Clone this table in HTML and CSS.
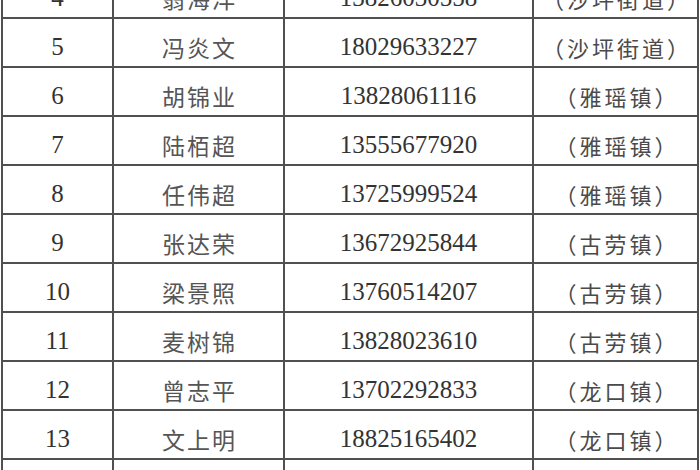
FILE: index.html
```html
<!DOCTYPE html>
<html lang="zh">
<head>
<meta charset="utf-8">
<link rel="stylesheet" href="styles.css">
</head>
<body>
<div class="sheet">
<table class="roster">
  <colgroup>
    <col class="c-no"><col class="c-name"><col class="c-tel"><col class="c-area">
  </colgroup>
  <tbody>
    <tr><td class="no">4</td><td class="name">翁海洋</td><td class="tel">13826030558</td><td class="area">（沙坪街道）</td></tr>
    <tr><td class="no">5</td><td class="name">冯炎文</td><td class="tel">18029633227</td><td class="area">（沙坪街道）</td></tr>
    <tr><td class="no">6</td><td class="name">胡锦业</td><td class="tel">13828061116</td><td class="area">（雅瑶镇）</td></tr>
    <tr><td class="no">7</td><td class="name">陆栢超</td><td class="tel">13555677920</td><td class="area">（雅瑶镇）</td></tr>
    <tr><td class="no">8</td><td class="name">任伟超</td><td class="tel">13725999524</td><td class="area">（雅瑶镇）</td></tr>
    <tr><td class="no">9</td><td class="name">张达荣</td><td class="tel">13672925844</td><td class="area">（古劳镇）</td></tr>
    <tr><td class="no">10</td><td class="name">梁景照</td><td class="tel">13760514207</td><td class="area">（古劳镇）</td></tr>
    <tr><td class="no">11</td><td class="name">麦树锦</td><td class="tel">13828023610</td><td class="area">（古劳镇）</td></tr>
    <tr><td class="no">12</td><td class="name">曾志平</td><td class="tel">13702292833</td><td class="area">（龙口镇）</td></tr>
    <tr><td class="no">13</td><td class="name">文上明</td><td class="tel">18825165402</td><td class="area">（龙口镇）</td></tr>
    <tr><td class="no"></td><td class="name"></td><td class="tel"></td><td class="area"></td></tr>
  </tbody>
</table>
</div>
</body>
</html>
```

FILE: styles.css
```css
html, body {
  margin: 0;
  padding: 0;
  background: #ffffff;
}

.sheet {
  width: 700px;
  height: 470px;
  overflow: hidden;
  background: #ffffff;
}

.roster {
  border-collapse: collapse;
  table-layout: fixed;
  width: 696px;
  margin: -32px 0 0 1px;
  color: #3a3a3a;
}

.c-no { width: 111px; }
.c-name { width: 171px; }
.c-tel { width: 249px; }
.c-area { width: 165px; }

.roster td {
  border: 2px solid #505050;
  height: 49px;
  padding: 8px 0 0 0;
  box-sizing: border-box;
  text-align: center;
  vertical-align: middle;
  white-space: nowrap;
  overflow: hidden;
}

.no, .tel {
  font-family: "Liberation Serif", "Noto Sans CJK SC", serif;
  font-size: 25px;
  color: #333333;
}

.name {
  font-family: "Noto Sans CJK SC", sans-serif;
  font-size: 23px;
  color: #555555;
  letter-spacing: 2px;
  text-indent: 2px;
}

.area {
  font-family: "Noto Sans CJK SC", sans-serif;
  font-size: 22px;
  color: #4a4a4a;
  letter-spacing: 3px;
  text-indent: 3px;
}
```
